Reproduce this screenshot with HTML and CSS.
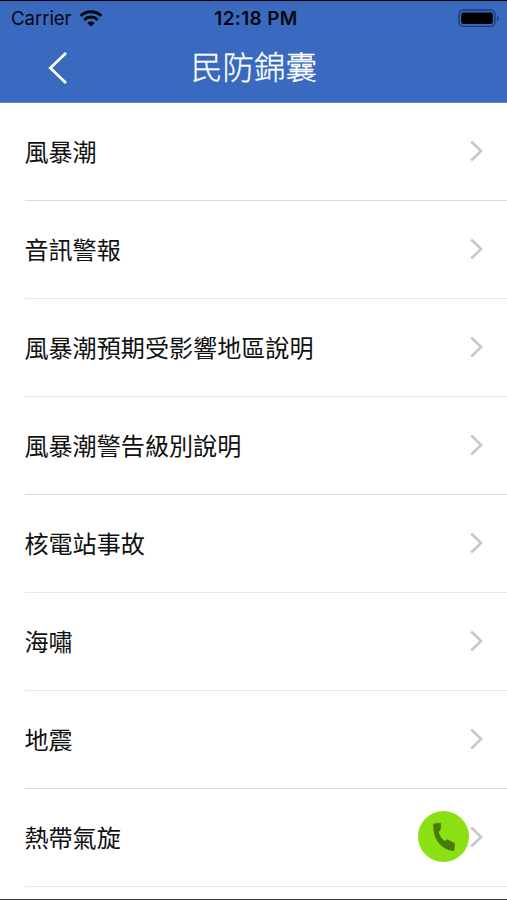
FILE: index.html
```html
<!DOCTYPE html>
<html lang="zh-Hant">
<head>
<meta charset="utf-8">
<title>民防錦囊</title>
<link rel="stylesheet" href="styles.css">
</head>
<body>
<div class="screen">
  <header class="header">
    <div class="status">
      <div class="carrier"><span>Carrier</span>
        <svg class="wifi" width="24" height="18" viewBox="0 0 24 18">
          <path d="M1.7 5.8C7.5.5 16.5.5 22.3 5.8M5.2 9.8c3.9-3.6 9.7-3.6 13.6 0" fill="none" stroke="#05070c" stroke-width="3"/>
          <path d="M12 16.6 8.3 13c2.1-1.9 5.3-1.9 7.4 0z" fill="#05070c"/>
        </svg>
      </div>
      <div class="time">12:18 PM</div>
      <div class="power">
        <svg width="42" height="20" viewBox="0 0 42 20">
          <rect x="1" y="1" width="36" height="16.4" rx="4.5" fill="none" stroke="#1d3a70" stroke-width="1.4"/>
          <rect x="3.2" y="3.4" width="31.6" height="11.6" rx="2.2" fill="#000"/>
          <path d="M39 6.4c2 1 2 4.8 0 5.8z" fill="#1d3a70"/>
        </svg>
      </div>
    </div>
    <nav class="nav">
      <svg class="back" width="20" height="34" viewBox="0 0 20 34"><path d="M18 2 2.3 17 18 32" fill="none" stroke="#fff" stroke-width="2.7"/></svg>
      <h1 class="title">民防錦囊</h1>
    </nav>
  </header>
  <ul class="list">
    <li class="row strong"><span>風暴潮</span><svg class="chevron" viewBox="0 0 13 22"><path d="m1.2 1.5 10 9.5-10 9.5"/></svg></li>
    <li class="row"><span>音訊警報</span><svg class="chevron" viewBox="0 0 13 22"><path d="m1.2 1.5 10 9.5-10 9.5"/></svg></li>
    <li class="row"><span>風暴潮預期受影響地區說明</span><svg class="chevron" viewBox="0 0 13 22"><path d="m1.2 1.5 10 9.5-10 9.5"/></svg></li>
    <li class="row strong"><span>風暴潮警告級別說明</span><svg class="chevron" viewBox="0 0 13 22"><path d="m1.2 1.5 10 9.5-10 9.5"/></svg></li>
    <li class="row"><span>核電站事故</span><svg class="chevron" viewBox="0 0 13 22"><path d="m1.2 1.5 10 9.5-10 9.5"/></svg></li>
    <li class="row"><span>海嘯</span><svg class="chevron" viewBox="0 0 13 22"><path d="m1.2 1.5 10 9.5-10 9.5"/></svg></li>
    <li class="row strong"><span>地震</span><svg class="chevron" viewBox="0 0 13 22"><path d="m1.2 1.5 10 9.5-10 9.5"/></svg></li>
    <li class="row"><span>熱帶氣旋</span><svg class="chevron" viewBox="0 0 13 22"><path d="m1.2 1.5 10 9.5-10 9.5"/></svg></li>
  </ul>
  <button class="call" aria-label="電話">
    <svg width="22" height="28" viewBox="0 0 22 28"><path fill="#457d08" d="M.3 1.6Q.3.7 1.2.6L7.1 0Q8 0 8 1L7.7 6.5Q7.5 8 5.6 8.8 7 14.4 11.5 17.9L13.3 16.8Q14 16.3 15 16.8L21.3 19.8Q22 20.2 22 21L21.3 27.2Q21 28.2 20 28C7.5 26.5-.2 15.5.3 1.6z"/></svg>
  </button>
</div>
</body>
</html>
```
FILE: styles.css
```css
* { box-sizing: border-box; }

body {
  margin: 0;
  background: #fff;
  font-family: "Noto Sans CJK TC", sans-serif;
}

.screen {
  position: relative;
  height: 900px;
  overflow: hidden;
  border-top: 1px solid #000;
  border-bottom: 1px solid #3a3a3a;
}

.header {
  height: 102px;
  background: #396abf;
  border-bottom: 1px solid #5f83c4;
}

.status {
  display: grid;
  grid-template-columns: 1fr auto 1fr;
  align-items: center;
  height: 34px;
  padding: 0 7px 0 11px;
  font: 18.7px/34px Inter, sans-serif;
  color: #05070c;
}

.carrier {
  display: flex;
  align-items: center;
  gap: 7px;
}

.carrier span {
  width: 61px;
  padding-top: 1px;
  letter-spacing: -0.1px;
}

.wifi { flex: none; }

.time {
  padding-left: 1px;
  font-size: 19px;
  font-weight: 600;
  letter-spacing: 0.35px;
}

.power {
  display: flex;
  justify-content: flex-end;
}

.nav {
  display: grid;
  grid-template-columns: 1fr auto 1fr;
  align-items: center;
  height: 66px;
}

.back { margin-left: 48px; }

.title {
  margin: 0;
  padding: 0 0 6px 1px;
  font-size: 31.5px;
  font-weight: 300;
  line-height: 60px;
  color: #fff;
  -webkit-text-stroke: 0.3px #fff;
}

.list {
  margin: 0;
  padding: 0 0 0 25px;
  list-style: none;
}

.row {
  display: flex;
  align-items: center;
  justify-content: space-between;
  height: 98px;
  padding: 0 24px 2px 0;
  border-bottom: 1px solid #e9e9e9;
  font-size: 24.1px;
  line-height: 36px;
  color: #111;
}

.row.strong { border-bottom-color: #dcdcdc; }

.row span { margin-left: -0.6px; }

.chevron {
  flex: none;
  width: 13px;
  height: 22px;
  fill: none;
  stroke: #c7c7c9;
  stroke-width: 2.6;
}

.call {
  position: absolute;
  right: 38px;
  bottom: 37px;
  display: grid;
  place-items: center;
  width: 51px;
  height: 51px;
  padding: 0;
  border: 0;
  border-radius: 50%;
  background: #8ae013;
}
```
